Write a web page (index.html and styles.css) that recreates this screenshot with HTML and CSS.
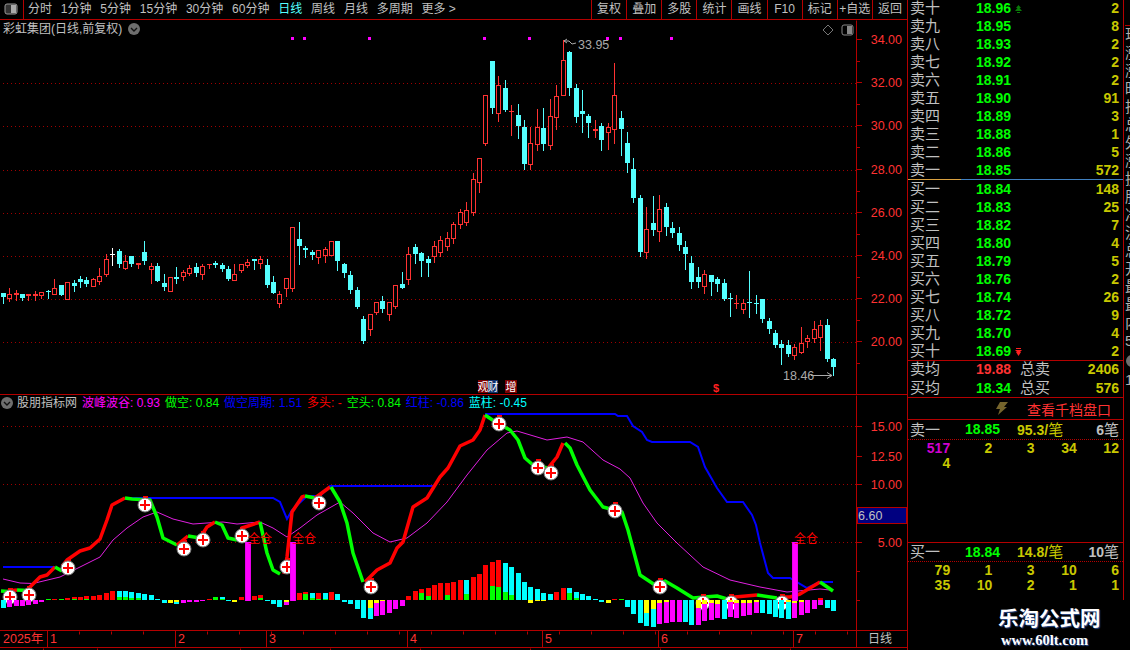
FILE: index.html
```html
<!DOCTYPE html>
<html lang="zh-CN">
<head>
  <meta charset="UTF-8">
  <meta name="viewport" content="width=device-width, initial-scale=1.0">
  <title>彩虹集团 日线</title>
  <link rel="stylesheet" href="styles.css">
</head>
<body>
  <div class="app">
    <div class="left">
      <div class="toolbar">
        <div class="panel-btn">
          <svg width="14" height="12" viewBox="0 0 14 12"><rect x="1" y="1" width="12" height="10" rx="2" fill="#333" stroke="#999"/><rect x="7" y="2" width="5" height="8" fill="#aaa"/></svg>
        </div>
        <div class="periods">
          <span>分时</span>
          <span>1分钟</span>
          <span>5分钟</span>
          <span>15分钟</span>
          <span>30分钟</span>
          <span>60分钟</span>
          <span class="active">日线</span>
          <span>周线</span>
          <span>月线</span>
          <span>多周期</span>
          <span>更多 &gt;</span>
        </div>
        <div class="tools">
          <span>复权</span>
          <span>叠加</span>
          <span>多股</span>
          <span>统计</span>
          <span>画线</span>
          <span>F10</span>
          <span>标记</span>
          <span>+自选</span>
          <span>返回</span>
        </div>
      </div>

      <div class="pane main-pane">
        <div class="pane-title">
          <span>彩虹集团(日线,前复权)</span>
          <svg class="round-btn" width="12" height="12" viewBox="0 0 12 12"><circle cx="6" cy="6" r="6" fill="#6e6e6e"/><path d="M3 5l3 3 3-3" fill="none" stroke="#111" stroke-width="1.4"/></svg>
        </div>
        <div class="pane-icons">
          <svg width="12" height="12" viewBox="0 0 12 12"><path d="M6 1l5 5-5 5-5-5z" fill="none" stroke="#777"/></svg>
          <svg width="13" height="12" viewBox="0 0 13 12"><rect x="1" y="1" width="11" height="10" rx="2" fill="none" stroke="#888"/><rect x="6" y="2" width="5" height="8" fill="#888"/></svg>
        </div>
        <svg id="mainChart" class="chart" width="907" height="374" viewBox="0 20 907 374"></svg>
      </div>

      <div class="pane sub-pane">
        <div class="pane-title sub-title">
          <svg class="round-btn first" width="12" height="12" viewBox="0 0 12 12"><circle cx="6" cy="6" r="6" fill="#6e6e6e"/><path d="M3 5l3 3 3-3" fill="none" stroke="#111" stroke-width="1.4"/></svg>
          <span class="name">股朋指标网</span>
          <span class="magenta">波峰波谷: 0.93</span>
          <span class="green">做空: 0.84</span>
          <span class="blue">做空周期: 1.51</span>
          <span class="red">多头: -</span>
          <span class="green">空头: 0.84</span>
          <span class="blue">红柱: -0.86</span>
          <span class="cyan">蓝柱: -0.45</span>
        </div>
        <svg id="subChart" class="chart" width="907" height="235" viewBox="0 395 907 235"></svg>
      </div>

      <svg id="timeAxis" class="chart" width="907" height="20" viewBox="0 630 907 20"></svg>
    </div>

    <div class="quote">
      <div class="quote-body">
        <div class="book sell">
          <div class="row"><span class="lb">卖十</span><span class="pr">18.96<svg class="mark" width="7" height="8" viewBox="0 0 7 8"><path d="M3.5 0L6 3H4.5L7 6H0L2.5 3H1zM2 7h3v1H2z" fill="#0a7a0a"/></svg></span><span class="qty">2</span></div>
          <div class="row"><span class="lb">卖九</span><span class="pr">18.95</span><span class="qty">8</span></div>
          <div class="row"><span class="lb">卖八</span><span class="pr">18.93</span><span class="qty">2</span></div>
          <div class="row"><span class="lb">卖七</span><span class="pr">18.92</span><span class="qty">2</span></div>
          <div class="row"><span class="lb">卖六</span><span class="pr">18.91</span><span class="qty">2</span></div>
          <div class="row"><span class="lb">卖五</span><span class="pr">18.90</span><span class="qty">91</span></div>
          <div class="row"><span class="lb">卖四</span><span class="pr">18.89</span><span class="qty">3</span></div>
          <div class="row"><span class="lb">卖三</span><span class="pr">18.88</span><span class="qty">1</span></div>
          <div class="row"><span class="lb">卖二</span><span class="pr">18.86</span><span class="qty">5</span></div>
          <div class="row"><span class="lb">卖一</span><span class="pr">18.85</span><span class="qty">572</span></div>
        </div>
        <div class="book-split"></div>
        <div class="book buy">
          <div class="row"><span class="lb">买一</span><span class="pr">18.84</span><span class="qty">148</span></div>
          <div class="row"><span class="lb">买二</span><span class="pr">18.83</span><span class="qty">25</span></div>
          <div class="row"><span class="lb">买三</span><span class="pr">18.82</span><span class="qty">7</span></div>
          <div class="row"><span class="lb">买四</span><span class="pr">18.80</span><span class="qty">4</span></div>
          <div class="row"><span class="lb">买五</span><span class="pr">18.79</span><span class="qty">5</span></div>
          <div class="row"><span class="lb">买六</span><span class="pr">18.76</span><span class="qty">2</span></div>
          <div class="row"><span class="lb">买七</span><span class="pr">18.74</span><span class="qty">26</span></div>
          <div class="row"><span class="lb">买八</span><span class="pr">18.72</span><span class="qty">9</span></div>
          <div class="row"><span class="lb">买九</span><span class="pr">18.70</span><span class="qty">4</span></div>
          <div class="row"><span class="lb">买十</span><span class="pr">18.69<svg class="mark" width="7" height="8" viewBox="0 0 7 8"><path d="M1 0h5v1H1zM0 2h7L5 4h1L3.500 8 1 4h1z" fill="#ff2020"/></svg></span><span class="qty">2</span></div>
        </div>
        <div class="totals">
          <div class="avg-row"><span class="lb">卖均</span><span class="pr up">19.88</span><span class="lb">总卖</span><span class="qty">2406</span></div>
          <div class="avg-row"><span class="lb">买均</span><span class="pr">18.34</span><span class="lb">总买</span><span class="qty">576</span></div>
        </div>
        <div class="depth-link">
          <svg width="12" height="13" viewBox="0 0 12 13"><path d="M4 0h8L8 5h3L2 13l2-6H0z" fill="#75642c"/></svg>
          <span>查看千档盘口</span>
        </div>
        <div class="order-block">
          <div class="order-head"><span class="lb">卖一</span><span class="pr">18.85</span><span class="avg-qty">95.3/<em>笔</em></span><span class="count">6<em>笔</em></span></div>
          <div class="orders">
            <span class="big">517</span><span>2</span><span>3</span><span>34</span><span>12</span>
            <span>4</span>
          </div>
        </div>
        <div class="order-block buy-orders">
          <div class="order-head"><span class="lb">买一</span><span class="pr">18.84</span><span class="avg-qty">14.8/<em>笔</em></span><span class="count">10<em>笔</em></span></div>
          <div class="orders">
            <span>79</span><span>1</span><span>3</span><span>10</span><span>6</span>
            <span>35</span><span>10</span><span>2</span><span>1</span><span>1</span>
          </div>
        </div>
      </div>
      <div class="watermark">
        <div class="wm-name">乐淘公式网</div>
        <div class="wm-url">www.60lt.com</div>
      </div>
    </div>

    <div class="side">
      <div class="side-list">
        <span>现</span><span>涨</span><span>涨</span><span>昨</span><span>振</span><span>总</span><span>外</span><span>涨</span><span>换</span><span>股</span><span>净</span><span>流</span><span>总</span><span>开</span><span>最</span><span>最</span><span>内</span><span>5</span>
        <svg class="side-btn" width="12" height="12" viewBox="0 0 12 12"><circle cx="6" cy="6" r="6" fill="#6e6e6e"/></svg>
        <span>1</span>
      </div>
    </div>
  </div>
  <script src="chart.js"></script>
</body>
</html>
```

FILE: styles.css
```css
* {
  box-sizing: border-box;
}
html, body {
  margin: 0;
  width: 1130px;
  height: 650px;
  overflow: hidden;
  background-color: #000;
}
body {
  font-family: "Liberation Sans", "Noto Sans CJK SC", sans-serif;
  font-size: 12px;
  color: #c0c0c0;
}
.app {
  display: flex;
  width: 1130px;
  height: 650px;
}

/* left side: toolbar + charts */
.left {
  width: 908px;
  height: 650px;
  border-right: 1px solid #b40000;
  flex: none;
}
.toolbar {
  display: flex;
  height: 20px;
  border-bottom: 1px solid #b40000;
  line-height: 19px;
  white-space: nowrap;
}
.panel-btn {
  width: 24px;
  border-right: 1px solid #b40000;
  padding: 3px 0 0 4px;
}
.panel-btn svg {
  display: block;
}
.periods {
  display: flex;
  gap: 8.800px;
  padding-left: 4px;
}
.periods .active {
  color: #55ffff;
}
.tools {
  display: flex;
  width: 316px;
  margin-left: auto;
}
.tools span {
  flex: 1;
  text-align: center;
  border-left: 1px solid #b40000;
}

.pane {
  position: relative;
}
.main-pane {
  height: 375px;
  border-bottom: 1px solid #b40000;
}
.sub-pane {
  height: 235px;
}
.chart {
  display: block;
}
.pane-title {
  position: absolute;
  left: 3px;
  top: 2px;
  display: flex;
  align-items: center;
  line-height: 14px;
  white-space: nowrap;
}
.round-btn {
  margin-left: 6px;
}
.round-btn.first {
  margin-left: -2px;
}
.pane-icons {
  position: absolute;
  left: 822px;
  top: 4px;
  display: flex;
  gap: 7px;
}
.sub-title {
  top: 1px;
  gap: 5px;
}
.sub-title .name {
  margin-left: -1px;
}
.magenta { color: #ff00ff; }
.green { color: #00ff00; }
.blue { color: #0000ff; }
.red { color: #ff0000; }
.cyan { color: #00ffff; }

/* chart parts drawn from chart.js */
.axis-label {
  font-size: 12.500px;
  fill: #ff3232;
  text-anchor: end;
  dominant-baseline: central;
}
.grid-line {
  stroke: #a00000;
  stroke-dasharray: 1 3;
}
.frame-line {
  stroke: #b40000;
}
.peak-label {
  font-size: 12.500px;
  fill: #aaaaaa;
  dominant-baseline: central;
}
.pointer {
  fill: none;
  stroke: #aaaaaa;
}
.news-tag {
  font-size: 11px;
  fill: #ffffff;
  text-anchor: middle;
  dominant-baseline: central;
}
.news-tag.money {
  fill: #ff2020;
  font-weight: bold;
}
.full-tag {
  font-size: 12px;
  fill: #ff0000;
  dominant-baseline: central;
}
.time-label {
  font-size: 12.500px;
  fill: #ff3232;
  dominant-baseline: central;
}
.time-name {
  font-size: 12px;
  fill: #c0c0c0;
  dominant-baseline: central;
}
.value-box {
  fill: #000080;
  stroke: #b40000;
}
.value-text {
  font-size: 12.500px;
  fill: #c0c0c0;
  dominant-baseline: central;
}
.thick-line {
  fill: none;
  stroke-width: 3.500px;
  stroke-linejoin: round;
}
.thin-line {
  fill: none;
}

/* order book */
.quote {
  width: 216px;
  flex: none;
}
.quote-body {
  height: 600px;
  border-right: 1px solid #b40000;
  overflow: hidden;
}
.book .row {
  display: grid;
  grid-template-columns: 66px 44px 1fr;
  height: 18px;
  line-height: 18px;
  padding: 0 4px 0 2px;
}
.book.sell {
  margin-top: -1px;
}
.lb {
  font-size: 15px;
  color: #c0c0c0;
  white-space: nowrap;
}
.pr {
  font-size: 14px;
  font-weight: bold;
  color: #00ff00;
  white-space: nowrap;
}
.pr.up {
  color: #ff3232;
}
.mark {
  margin-left: 4px;
}
.qty {
  font-size: 14px;
  font-weight: bold;
  color: #c8c800;
  text-align: right;
}
.book-split {
  height: 1px;
  background: linear-gradient(to right, #d8a040 53px, #4080c0 53px);
}
.totals {
  border-top: 1px solid #b40000;
  border-bottom: 1px solid #b40000;
  height: 38px;
}
.avg-row {
  display: grid;
  grid-template-columns: 66px 44px 32px 1fr;
  height: 18px;
  line-height: 16px;
  padding: 0 4px 0 2px;
}
.avg-row + .avg-row {
  margin-top: 1px;
}
.depth-link {
  display: flex;
  align-items: center;
  height: 22px;
  padding-left: 88px;
  gap: 19px;
  border-bottom: 1px solid #b40000;
  font-size: 14px;
  color: #ff3232;
}
.order-block {
  height: 122px;
}
.buy-orders {
  height: 58px;
  border-top: 1px solid #b40000;
}
.order-head {
  display: grid;
  grid-template-columns: 55px 52px 1fr auto;
  height: 20px;
  line-height: 19px;
  padding: 0 4px 0 2px;
  border-bottom: 1px dotted #b40000;
}
.buy-orders .order-head {
  height: 19px;
  line-height: 18px;
}
.order-head em {
  font-style: normal;
  font-size: 15px;
  font-weight: normal;
}
.avg-qty {
  font-size: 14px;
  font-weight: bold;
  color: #c8c800;
}
.count {
  font-size: 14px;
  font-weight: bold;
  color: #c0c0c0;
}
.orders {
  display: grid;
  grid-template-columns: repeat(5, 42.200px);
  padding-top: 1px;
  font-size: 14px;
  font-weight: bold;
  line-height: 15px;
  color: #c8c800;
  text-align: right;
}
.orders .big {
  color: #d000d0;
}
.watermark {
  padding: 7px 0 0 90px;
  color: #ffffff;
  white-space: nowrap;
  text-shadow: 1px 1px 1px #2a4a8a;
}
.wm-name {
  font-size: 20.500px;
  font-weight: bold;
  line-height: 24px;
}
.wm-url {
  font-family: "Liberation Serif", serif;
  font-size: 14.500px;
  font-weight: bold;
  line-height: 18px;
  margin-left: 3px;
}

/* cut off panel at the window edge */
.side {
  width: 6px;
  overflow: hidden;
  flex: none;
}
.side-list {
  display: flex;
  flex-direction: column;
  align-items: flex-start;
  width: 24px;
  margin: 25px 0 0 1px;
  border-top: 1px solid #b40000;
  font-size: 15px;
  line-height: 18px;
  color: #b0b0b0;
}
.side-btn {
  margin: 5px 0 4px 1px;
}
```

FILE: chart.js
```js
var NS = 'http://www.w3.org/2000/svg';

function el(parent, name, attrs, text) {
  var node = document.createElementNS(NS, name);
  for (var key in attrs) node.setAttribute(key, attrs[key]);
  if (text !== undefined) node.textContent = text;
  parent.appendChild(node);
  return node;
}

function line(parent, x1, y1, x2, y2, cls) {
  return el(parent, 'line', { x1: x1, y1: y1 + 0.5, x2: x2, y2: y2 + 0.5, 'class': cls });
}

// x, high, body top, body bottom, low, kind (c = down, r = up, w = flat)
var candles = [
  [3,293,293,297,303,'c'],[9,288,294,298,301,'r'],[16,290,293,295,300,'r'],[22,294,294,298,300,'c'],
  [28,294,294,296,300,'r'],[35,291,294,296,300,'r'],[41,292,292,295,298,'r'],[48,290,291,292,298,'c'],
  [54,279,288,294,294,'r'],[61,285,285,295,295,'c'],[67,282,282,299,299,'r'],[74,280,283,286,291,'c'],
  [80,276,279,282,287,'c'],[86,277,280,284,286,'c'],[93,278,279,286,286,'r'],[99,268,276,281,284,'r'],
  [106,254,259,274,276,'r'],[112,248,254,255,265,'w'],[119,249,251,264,267,'c'],[125,255,261,268,269,'r'],
  [131,256,256,264,266,'c'],[138,263,263,265,268,'r'],[144,241,252,261,264,'c'],[151,263,266,269,283,'r'],
  [157,263,266,281,281,'c'],[164,274,283,287,290,'c'],[170,277,277,291,291,'r'],[176,267,277,279,283,'c'],
  [183,270,272,276,280,'r'],[189,265,268,273,275,'r'],[196,263,267,273,276,'c'],[202,264,266,274,279,'r'],
  [209,264,264,265,268,'r'],[215,261,263,265,267,'c'],[222,263,265,269,271,'c'],[228,266,269,279,280,'c'],
  [234,264,274,280,280,'r'],[241,264,264,270,272,'r'],[247,259,262,265,267,'r'],[254,259,259,261,269,'c'],
  [260,256,259,263,268,'r'],[267,259,265,285,287,'c'],[273,276,282,293,293,'c'],[279,291,294,303,307,'r'],
  [286,278,278,288,296,'r'],[292,227,227,288,291,'r'],[299,222,239,246,264,'c'],[305,246,248,250,257,'c'],
  [312,250,252,255,259,'c'],[318,250,250,257,263,'r'],[325,247,249,255,262,'r'],[331,241,241,255,255,'r'],
  [337,241,241,261,270,'c'],[344,263,264,273,277,'c'],[350,271,275,290,293,'c'],[357,287,290,307,308,'c'],
  [363,316,319,341,343,'c'],[370,314,314,329,335,'r'],[376,302,302,312,314,'r'],[382,296,301,309,312,'c'],
  [389,302,302,314,320,'r'],[395,285,285,306,308,'r'],[402,272,284,288,288,'c'],[408,247,254,279,284,'r'],
  [415,244,247,254,263,'c'],[421,252,253,261,276,'c'],[428,256,259,263,276,'c'],[434,241,246,256,262,'r'],
  [440,236,240,252,256,'r'],[447,232,238,246,250,'r'],[453,222,224,238,243,'r'],[460,209,212,224,228,'r'],
  [466,202,210,222,225,'r'],[473,173,179,212,215,'r'],[479,158,158,182,192,'r'],[485,95,95,143,145,'r'],
  [492,61,61,108,113,'c'],[498,76,85,113,121,'r'],[505,80,88,110,111,'c'],[511,105,111,112,135,'r'],
  [518,104,115,126,138,'c'],[524,120,127,164,169,'c'],[530,127,143,164,169,'r'],[537,109,127,144,150,'r'],
  [543,108,128,144,150,'c'],[550,99,116,145,149,'r'],[556,85,96,117,129,'r'],[563,40,60,95,95,'r'],
  [569,51,52,88,95,'c'],[576,84,88,117,122,'c'],[582,90,111,114,132,'c'],[588,114,116,123,137,'c'],
  [595,120,129,131,137,'r'],[601,123,126,140,150,'c'],[608,123,127,132,149,'r'],[614,63,95,129,143,'r'],
  [621,111,118,129,155,'c'],[627,132,143,163,172,'c'],[633,158,169,198,202,'c'],[640,195,198,252,256,'c'],
  [646,207,229,252,258,'r'],[653,196,223,230,235,'c'],[659,195,209,231,241,'r'],[666,203,207,227,235,'c'],
  [672,222,228,233,237,'c'],[679,227,233,245,250,'c'],[685,241,247,254,269,'c'],[691,256,263,282,288,'c'],
  [698,267,277,282,287,'c'],[704,270,274,286,293,'r'],[711,275,275,282,295,'c'],[717,277,279,284,291,'c'],
  [724,279,283,299,300,'c'],[730,293,298,299,316,'c'],[736,295,303,304,308,'r'],[743,299,303,309,313,'r'],
  [749,271,302,303,317,'c'],[756,295,303,304,313,'c'],[762,299,299,319,322,'c'],[769,318,321,329,333,'c'],
  [775,330,333,345,347,'c'],[781,340,344,348,364,'c'],[788,340,345,354,356,'c'],[794,344,347,355,359,'r'],
  [801,327,343,352,353,'r'],[807,335,338,341,347,'r'],[814,321,329,338,342,'r'],[820,320,325,337,350,'r'],
  [827,319,325,359,361,'c'],[833,358,359,367,375,'c']
];

var COLORS = { c: '#00ffff', m: '#ff00ff', r: '#ff0000', g: '#00ff00', y: '#ffff00' };

// x, value (px from the zero line), colour, colour at the zero line, its length
var bars = [
  [3,-8,'c'],[9,-6.5,'m'],[16,-6,'m'],[22,-6,'m'],[28,-5,'m'],[35,-4,'m'],[41,-2,'m'],[48,1,'g'],[54,1,'r'],
  [61,1,'g'],[67,2,'r'],[74,3,'r','g',1.5],[80,3,'r'],[86,4,'r','g',1.5],[93,4,'r'],[99,5,'r'],[106,7,'r'],
  [112,9,'r'],[119,9,'c','g',3.5],[125,9,'c','g',3],[131,8,'c','g',2],[138,7,'c','g',2],[144,6,'c'],[151,5,'c'],
  [157,1,'c'],[164,-3,'c'],[170,-3,'y'],[176,-4,'c','y',2],[183,-3,'m'],[189,-2,'m'],[196,-2,'m'],[202,-1,'m'],
  [209,1,'r'],[215,3,'g'],[222,3,'c','g',1],[228,-1,'c'],[234,-2,'y'],[241,3,'r'],[254,4,'r'],[260,5,'r','g',2],
  [267,-1,'c'],[273,-4,'c'],[279,-7,'c'],[286,-5,'m','y',2],[299,7,'r'],[305,8,'r','g',6],[312,7,'c','g',2],
  [318,7,'r','g',1.5],[325,7,'c','g',1.5],[331,8,'r'],[337,6,'c'],[344,-2,'c'],[350,-4,'c'],[357,-9,'c'],
  [363,-18,'c'],[370,-19,'c','y',8],[376,-16,'m','y',3],[382,-15,'m','y',1],[389,-13,'m'],[395,-9,'m'],[402,-6,'m'],
  [408,4,'r'],[415,9,'r'],[421,11,'r','g',7],[428,12,'r','g',4],[434,15,'r'],[440,17,'r'],[447,17,'r','g',5],
  [453,18,'r'],[460,20,'r'],[466,20,'c','g',6],[473,23,'r'],[479,26,'r'],[485,35,'r'],[492,38,'r','g',14],
  [498,40,'r','g',13],[505,37,'c','g',8],[511,33,'c','g',5],[518,27,'c'],[524,18,'c'],[530,13,'c'],[530,-3,'y'],
  [537,11,'c'],[537,-1,'y'],[543,7,'c'],[543,-1,'y'],[550,6,'c'],[556,8,'r'],[563,12,'r'],[569,12,'c','g',7],
  [576,8,'c','g',2],[582,6,'c'],[588,4,'c'],[595,1,'c'],[601,-2,'c'],[608,-3,'y'],[614,1,'r'],[621,1,'g'],
  [627,-7,'c'],[633,-14,'c'],[640,-23,'c'],[646,-26,'c','y',13],[653,-27,'c','y',9],[659,-24,'m','y',3],
  [666,-23,'m','y',2],[672,-22,'m'],[679,-22,'m'],[685,-22,'c'],[691,-25,'c'],[698,-25,'m','y',8],[704,-21,'m','y',4],
  [711,-20,'m','y',3],[717,-18,'m','y',4],[724,-19,'c'],[730,-17,'m','y',2],[736,-18,'m','y',3],[743,-16,'m','y',3],
  [749,-15,'m','y',3],[756,-13,'m','y',2],[762,-13,'c'],[769,-14,'c'],[775,-17,'c'],[781,-18,'c'],[788,-19,'c','y',2],
  [794,-18,'m','y',3],[801,-15,'m','y',2],[807,-13,'m'],[814,-9,'m'],[820,-5,'m'],[820,2,'r'],[827,-8,'c'],[833,-11,'c']
];

var blueParts = [
  '3,567 55,567',
  '125,498 273,498 280,502 287,519 292,510 307,496 320,496 330,486 433,486',
  '485,414 615,414 618,416 627,416 633,426 642,432 647,440 652,442 690,442 698,447 705,467 717,488 727,502 743,502 752,515 756,525 760,543 768,573 773,578 790,578 807,588 820,582 833,582'
];

var purpleLine = '3,579 20,583 33,583.5 60,577 80,567 100,557 113,540 127,528 143,517 157,512 173,519 193,524 207,523 223,522 237,524 260,522 273,528 287,537 300,528 317,515 340,502 353,513 373,533 390,542 407,538 427,523 447,502 467,475 487,450 507,433 517,431 547,440 567,437 583,442 603,460 620,469 630,478 643,503 657,523 677,543 703,567 730,580 760,587 787,592 820,589 830,590';

// thick line, colour changes on each turn
var waves = [
  ['g','1,591 8,591.5'],['r','8,591 17,590'],['g','17,590 27,590.5'],
  ['r','27,590 40,577 47,575 55,567'],['g','55,567 62,571'],
  ['r','62,566 67,560 80,551 90,548 100,539 107,520 112,505 125,498'],
  ['g','125,498 132,499 150,500 157,517 163,538 177,545'],['r','177,545 188,536'],['g','188,536 200,538'],
  ['r','200,538 207,527 215,522'],['g','215,522 222,525 228,538 237,540'],
  ['r','237,540 242,528 257,523 260,522'],['g','260,522 267,553 273,570 280,574'],
  ['r','284,574 287,557 292,512 302,497 305,496'],['g','305,496 315,498'],['r','315,498 330,487'],
  ['g','331,487 340,502 347,523 353,553 363,582'],
  ['r','365,582 377,570 390,563 397,548 403,542 413,507 427,498 440,477 448,468 460,446 473,440 480,430 485,415'],
  ['g','485,415 497,423 510,430 518,440 525,458 533,465 548,468'],['r','548,468 557,457 563,443'],
  ['g','565,443 570,448 577,465 590,490 603,507 622,512 628,530 640,575 655,585 665,581 677,588 693,598 717,596 727,599'],
  ['r','730,598 735,597 757,595'],['g','757,595 777,598'],['r','780,597 790,597 800,594 820,582'],['g','820,582 833,591']
];

var buySignals = [
  [10,597],[29,595],[68,568],[145,505],[184,549],[203,540],[242,536],[287,567],[319,503],[371,587],
  [499,424],[538,468],[551,473],[615,511],[660,587],[703,603],[731,603],[782,603]
];

function drawMain() {
  var svg = document.getElementById('mainChart');
  var gridY = [83, 126, 170, 213, 256, 299, 342];
  gridY.forEach(function (y) { line(svg, 3, y, 856, y, 'grid-line'); });

  line(svg, 856.5, 20, 856.5, 394, 'frame-line');
  var labels = [[40,'34.00'],[83,'32.00'],[126,'30.00'],[170,'28.00'],[213,'26.00'],[256,'24.00'],[299,'22.00'],[342,'20.00']];
  labels.forEach(function (item) {
    line(svg, 857, item[0] - 1, 862, item[0] - 1, 'frame-line');
    line(svg, 857, item[0] + 21, 860, item[0] + 21, 'frame-line');
    el(svg, 'text', { x: 902, y: item[0], 'class': 'axis-label' }, item[1]);
  });

  [292, 304, 369, 484, 529, 607, 620, 671].forEach(function (x) {
    el(svg, 'rect', { x: x - 1, y: 37, width: 3, height: 3, fill: '#ff00ff' });
  });

  var g = el(svg, 'g', { 'shape-rendering': 'crispEdges' });
  candles.forEach(function (c) {
    var x = c[0], color = c[5] === 'r' ? '#ff3232' : c[5] === 'w' ? '#ffffff' : '#55ffff';
    el(g, 'rect', { x: x, y: c[1], width: 1, height: c[4] - c[1] + 1, fill: color });
    var h = c[3] - c[2];
    if (c[5] === 'r' && h > 2) {
      el(g, 'rect', { x: x - 2, y: c[2], width: 5, height: h + 1, fill: '#000' });
      el(g, 'rect', { x: x - 1.5, y: c[2] + 0.5, width: 4, height: h, fill: 'none', stroke: color });
    } else {
      el(g, 'rect', { x: x - 2, y: c[2], width: 5, height: Math.max(h, 1), fill: color });
    }
  });

  // peak and last price pointers
  el(svg, 'text', { x: 578, y: 45, 'class': 'peak-label' }, '33.95');
  el(svg, 'path', { d: 'M567 39l-3 2 3 2M564 41h5l3 3 4-1', 'class': 'pointer' });
  el(svg, 'text', { x: 783, y: 376, 'class': 'peak-label' }, '18.46');
  el(svg, 'path', { d: 'M811 375.500h21M827 372.500l5 3-5 3', 'class': 'pointer' });

  // news tags under the candles
  el(svg, 'rect', { x: 478, y: 380, width: 10, height: 13, fill: '#7a0000' });
  el(svg, 'rect', { x: 488, y: 380, width: 10, height: 13, fill: '#10306a' });
  el(svg, 'rect', { x: 505, y: 380, width: 12, height: 13, fill: '#7a0000' });
  el(svg, 'text', { x: 483, y: 387, 'class': 'news-tag' }, '观');
  el(svg, 'text', { x: 493, y: 387, 'class': 'news-tag' }, '财');
  el(svg, 'text', { x: 511, y: 387, 'class': 'news-tag' }, '增');
  el(svg, 'text', { x: 716, y: 388, 'class': 'news-tag money' }, '$');
}

function drawSub() {
  var svg = document.getElementById('subChart');
  [426, 484, 542].forEach(function (y) { line(svg, 3, y, 856, y, 'grid-line'); });

  line(svg, 856.5, 395, 856.5, 630, 'frame-line');
  [[426,'15.00'],[456,'12.50'],[484,'10.00'],[542,'5.00']].forEach(function (item) {
    line(svg, 857, item[0], 862, item[0], 'frame-line');
    el(svg, 'text', { x: 902, y: item[0] + 1, 'class': 'axis-label' }, item[1]);
  });
  [513, 571, 600].forEach(function (y) { line(svg, 857, y, 860, y, 'frame-line'); });

  el(svg, 'rect', { x: 857.5, y: 507.5, width: 49, height: 16, 'class': 'value-box' });
  el(svg, 'text', { x: 858, y: 515.5, 'class': 'value-text' }, '6.60');

  blueParts.forEach(function (pts) {
    el(svg, 'polyline', { points: pts, 'class': 'thin-line', stroke: '#0000ff', 'stroke-width': 2 });
  });
  el(svg, 'polyline', { points: purpleLine, 'class': 'thin-line', stroke: '#e020e0', 'stroke-width': 1 });
  waves.forEach(function (w) {
    el(svg, 'polyline', { points: w[1], 'class': 'thick-line', stroke: COLORS[w[0]] });
  });

  buySignals.forEach(function (p) {
    el(svg, 'rect', { x: p[0] - 2, y: p[1] - 9, width: 5, height: 2, fill: '#ff0000' });
    el(svg, 'circle', { cx: p[0], cy: p[1], r: 7, fill: '#ffffff', stroke: '#777', 'stroke-width': 1 });
    el(svg, 'path', { d: 'M' + (p[0] - 5) + ' ' + p[1] + 'h10M' + p[0] + ' ' + (p[1] - 5) + 'v10', stroke: '#ff0000', 'stroke-width': 2 });
  });

  var g = el(svg, 'g', { 'shape-rendering': 'crispEdges' });
  bars.forEach(function (b) {
    var x = b[0] - 2, v = b[1], abs = Math.abs(v), top = v > 0 ? 600 - v : 600;
    el(g, 'rect', { x: x, y: top, width: 5, height: abs, fill: COLORS[b[2]] });
    if (b[3]) {
      el(g, 'rect', { x: x, y: v > 0 ? 600 - b[4] : 600, width: 5, height: b[4], fill: COLORS[b[3]] });
    }
  });

  [245, 290, 792].forEach(function (x) {
    el(g, 'rect', { x: x, y: 542, width: 6, height: 59, fill: '#e800e8' });
    el(g, 'rect', { x: x + 1, y: 542, width: 4, height: 59, fill: '#ff00ff' });
  });
  [248, 292, 794].forEach(function (x) {
    el(svg, 'text', { x: x, y: 539, 'class': 'full-tag' }, '全仓');
  });
}

function drawTime() {
  var svg = document.getElementById('timeAxis');
  line(svg, 0, 630, 907, 630, 'frame-line');
  line(svg, 0, 647, 907, 647, 'frame-line');
  line(svg, 856.5, 630, 856.5, 647, 'frame-line');
  el(svg, 'text', { x: 3, y: 638.5, 'class': 'time-label' }, '2025年');
  el(svg, 'text', { x: 868, y: 638.5, 'class': 'time-name' }, '日线');
  [[47,'1'],[175,'2'],[266,'3'],[407,'4'],[542,'5'],[658,'6'],[793,'7']].forEach(function (m) {
    line(svg, m[0] + 0.5, 630, m[0] + 0.5, 647, 'frame-line');
    el(svg, 'text', { x: m[0] + 3, y: 638.5, 'class': 'time-label' }, m[1]);
  });
  for (var x = 79; x < 856; x += 32) line(svg, x + 0.5, 631, x + 0.5, 634, 'frame-line');
  [43, 97, 240, 330, 420, 530, 660, 790].forEach(function (x) {
    line(svg, x + 0.5, 648, x + 0.5, 650, 'frame-line');
  });
}

drawMain();
drawSub();
drawTime();
```
